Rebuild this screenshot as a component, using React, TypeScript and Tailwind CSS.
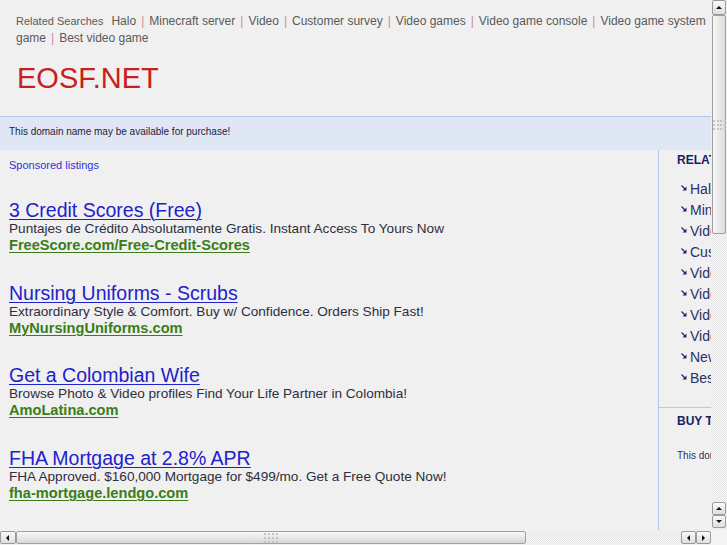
import React from 'react';

const headerLinks = [
  'Halo',
  'Minecraft server',
  'Video',
  'Customer survey',
  'Video games',
  'Video game console',
  'Video game system',
];

const sideLinks = [
  'Halo',
  'Minecraft server',
  'Video',
  'Customer survey',
  'Video games',
  'Video game console',
  'Video game system',
  'Video game',
  'New video games',
  'Best video game',
];

const ads = [
  {
    title: '3 Credit Scores (Free)',
    desc: 'Puntajes de Crédito Absolutamente Gratis. Instant Access To Yours Now',
    url: 'FreeScore.com/Free-Credit-Scores',
  },
  {
    title: 'Nursing Uniforms - Scrubs',
    desc: 'Extraordinary Style & Comfort. Buy w/ Confidence. Orders Ship Fast!',
    url: 'MyNursingUniforms.com',
  },
  {
    title: 'Get a Colombian Wife',
    desc: 'Browse Photo & Video profiles Find Your Life Partner in Colombia!',
    url: 'AmoLatina.com',
  },
  {
    title: 'FHA Mortgage at 2.8% APR',
    desc: 'FHA Approved. $160,000 Mortgage for $499/mo. Get a Free Quote Now!',
    url: 'fha-mortgage.lendgo.com',
  },
];

function Arrow({ dir }: { dir: 'up' | 'down' | 'left' | 'right' }) {
  const pts = {
    up: '1,5 4,2 7,5',
    down: '1,2 4,5 7,2',
    left: '5,1 2,4 5,7',
    right: '2,1 5,4 2,7',
  }[dir];
  return (
    <svg width="8" height="8" viewBox="0 0 8 8">
      <polygon points={pts} fill="#111" />
    </svg>
  );
}

function SbButton({ dir, className = '' }: { dir: 'up' | 'down' | 'left' | 'right'; className?: string }) {
  return (
    <div
      className={`flex items-center justify-center rounded-[2px] border border-[#9a9a9a] bg-gradient-to-b from-[#fafafa] to-[#dedede] ${className}`}
    >
      <Arrow dir={dir} />
    </div>
  );
}

function Grip() {
  return (
    <div className="grid grid-cols-4 gap-[2px]">
      {Array.from({ length: 12 }).map((_, i) => (
        <div key={i} className="h-[2px] w-[2px] bg-[#c4c4c4]" />
      ))}
    </div>
  );
}

const track =
  'bg-[repeating-conic-gradient(#e6e6e6_0%_25%,#f6f6f6_0%_50%)] bg-[length:2px_2px]';

function SideIcon() {
  return (
    <svg width="6" height="6" viewBox="0 0 6 6" className="mr-[3px] mt-[-4px] shrink-0">
      <line x1="0.5" y1="0.5" x2="4" y2="4" stroke="#23286a" strokeWidth="1.2" />
      <polygon points="5.5,1.5 5.5,5.5 1.5,5.5" fill="#23286a" />
    </svg>
  );
}

export default function App() {
  return (
    <div className="flex h-[545px] w-[727px] flex-col overflow-hidden bg-[#f0f0f0] font-['Liberation_Sans',Arial,sans-serif]">
      <div className="flex h-[530px]">
        {/* page */}
        <div className="w-[711px] shrink-0 overflow-hidden">
          <div className="pl-4 pt-[13px] text-[12px] leading-[17px] text-[#5a5a5a]">
            <div className="whitespace-nowrap">
              <span className="mr-[8px] text-[11px]">Related Searches</span>
              {headerLinks.map((l, i) => (
                <React.Fragment key={l}>
                  {i > 0 && <span className="mx-[5px] text-[#d08a9a]">|</span>}
                  <span>{l}</span>
                </React.Fragment>
              ))}
            </div>
            <div className="whitespace-nowrap">
              <span>game</span>
              <span className="mx-[5px] text-[#d08a9a]">|</span>
              <span>Best video game</span>
            </div>
          </div>

          <div className="mt-[14px] pl-[17px] text-[29px] leading-[34px] text-[#c8201e]">EOSF.NET</div>

          <div className="mt-[21px] h-[34px] border-t border-[#b3c6ea] bg-[#dfe6f4] pl-[9px] pt-[9px] text-[10px] leading-[12px] text-[#1d1d40]">
            This domain name may be available for purchase!
          </div>

          <div className="flex">
            <div className="w-[658px] shrink-0 pl-[9px]">
              <div className="pt-[8px] text-[11px] leading-[14px] text-[#3030dc]">Sponsored listings</div>
              <div className="mt-[28px]">
                {ads.map((a) => (
                  <div key={a.title} className="mb-[28.7px]">
                    <div className="text-[19.5px] leading-[20px] text-[#2222cc] underline decoration-1 underline-offset-2">
                      {a.title}
                    </div>
                    <div className="text-[13.6px] leading-[17px] text-[#2e2e3e]">{a.desc}</div>
                    <div className="text-[14.6px] font-bold leading-[17px] text-[#3b7d18] underline decoration-1 underline-offset-2">
                      {a.url}
                    </div>
                  </div>
                ))}
              </div>
            </div>

            <div className="h-[400px] w-[220px] shrink-0 border-l border-[#b7c8ee]">
              <div className="border-b border-[#b7c8ee] pb-[18px] pl-[18px] pt-[3px]">
                <div className="whitespace-nowrap text-[12px] font-bold leading-[14px] text-[#1b1f5e]">RELATED SEARCHES</div>
                <div className="mt-[12px]">
                  {sideLinks.map((l) => (
                    <div key={l} className="flex h-[21px] items-center whitespace-nowrap pl-[4px] text-[14px] text-[#29306a]">
                      <SideIcon />
                      {l}
                    </div>
                  ))}
                </div>
              </div>
              <div className="pl-[18px] pt-[6px]">
                <div className="whitespace-nowrap text-[12px] font-bold leading-[14px] text-[#1b1f5e]">BUY THIS DOMAIN</div>
                <div className="mt-[22px] whitespace-nowrap text-[10px] leading-[12px] text-[#29306a]">
                  This domain name may be available for purchase!
                </div>
              </div>
            </div>
          </div>
        </div>

        {/* vertical scrollbar */}
        <div className="flex w-[16px] flex-col">
          <SbButton dir="up" className="mx-[1px] h-[15px]" />
          <div className="mx-[1px] flex h-[219px] items-center justify-center rounded-[2px] border border-[#a0a0a0] bg-gradient-to-r from-[#f7f7f7] to-[#dcdcdc]">
            <Grip />
          </div>
          <div className={`flex-1 ${track}`} />
          <SbButton dir="up" className="mx-[1px] h-[13px]" />
          <SbButton dir="down" className="mx-[1px] h-[13px]" />
          <div className={`h-[2px] ${track}`} />
        </div>
      </div>

      {/* horizontal scrollbar */}
      <div className="flex h-[15px]">
        <div className="flex w-[711px] items-stretch py-[1px]">
          <SbButton dir="left" className="w-[16px]" />
          <div className="flex w-[510px] items-center justify-center rounded-[2px] border border-[#a0a0a0] bg-gradient-to-b from-[#f7f7f7] to-[#d8d8d8]">
            <Grip />
          </div>
          <div className={`flex-1 ${track}`} />
          <SbButton dir="left" className="w-[15px]" />
          <SbButton dir="right" className="w-[15px]" />
        </div>
        <div className="flex-1 bg-[#f4f4f4]" />
      </div>
    </div>
  );
}
